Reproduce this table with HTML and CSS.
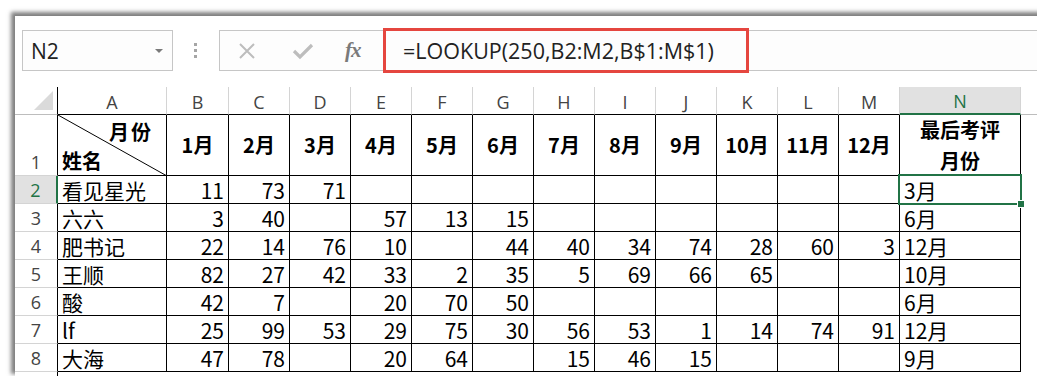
FILE: index.html
```html
<!DOCTYPE html>
<html lang="zh">
<head>
<meta charset="utf-8">
<title>Excel LOOKUP</title>
<link rel="stylesheet" href="styles.css">
</head>
<body>
<div class="window">
  <div class="fbar">
    <div class="namebox"><span class="nb-text">N2</span><span class="caret"></span></div>
    <div class="dots">
      <svg width="4" height="16" viewBox="0 0 4 16"><rect x="0" y="0" width="3" height="3" fill="#a6a6a6"/><rect x="0" y="6" width="3" height="3" fill="#a6a6a6"/><rect x="0" y="12" width="3" height="3" fill="#a6a6a6"/></svg>
    </div>
    <div class="btns">
      <svg class="ic-x" width="18" height="18" viewBox="0 0 18 18"><path d="M2 2 L16 16 M16 2 L2 16" stroke="#bdbdbd" stroke-width="2" fill="none"/></svg>
      <svg class="ic-ok" width="22" height="18" viewBox="0 0 22 18"><path d="M2 9 L8 15 L20 3" stroke="#bdbdbd" stroke-width="3.2" fill="none"/></svg>
      <span class="fx">fx</span>
    </div>
    <div class="finput">
      <div class="hl"><span class="ftext">=LOOKUP(250,B2:M2,B$1:M$1)</span></div>
    </div>
  </div>

  <div class="sheet">
    <div class="ch corner"><span class="tri"></span></div>
    <div class="ch col">A</div><div class="ch col">B</div><div class="ch col">C</div><div class="ch col">D</div><div class="ch col">E</div><div class="ch col">F</div><div class="ch col">G</div><div class="ch col">H</div><div class="ch col">I</div><div class="ch col">J</div><div class="ch col">K</div><div class="ch col">L</div><div class="ch col">M</div><div class="ch col sel">N</div><div class="ch rest"></div>

    <div class="rh">1</div>
    <div class="c diag">
      <svg class="diagline" width="109" height="61" viewBox="0 0 109 61" preserveAspectRatio="none"><line x1="0" y1="0" x2="109" y2="61" stroke="#000" stroke-width="1"/></svg>
      <span class="d-top">月份</span>
      <span class="d-bot">姓名</span>
    </div>
    <div class="c h">1月</div><div class="c h">2月</div><div class="c h">3月</div><div class="c h">4月</div><div class="c h">5月</div><div class="c h">6月</div><div class="c h">7月</div><div class="c h">8月</div><div class="c h">9月</div><div class="c h">10月</div><div class="c h">11月</div><div class="c h">12月</div>
    <div class="c h two">最后考评<br>月份</div><div class="rest"></div>

    <div class="rh sel">2</div>
    <div class="c">看见星光</div><div class="c n">11</div><div class="c n">73</div><div class="c n">71</div><div class="c n"></div><div class="c n"></div><div class="c n"></div><div class="c n"></div><div class="c n"></div><div class="c n"></div><div class="c n"></div><div class="c n"></div><div class="c n"></div>
    <div class="c active">3月<span class="selbox"><span class="handle"></span></span></div><div class="rest"></div>

    <div class="rh">3</div>
    <div class="c">六六</div><div class="c n">3</div><div class="c n">40</div><div class="c n"></div><div class="c n">57</div><div class="c n">13</div><div class="c n">15</div><div class="c n"></div><div class="c n"></div><div class="c n"></div><div class="c n"></div><div class="c n"></div><div class="c n"></div>
    <div class="c">6月</div><div class="rest"></div>

    <div class="rh">4</div>
    <div class="c">肥书记</div><div class="c n">22</div><div class="c n">14</div><div class="c n">76</div><div class="c n">10</div><div class="c n"></div><div class="c n">44</div><div class="c n">40</div><div class="c n">34</div><div class="c n">74</div><div class="c n">28</div><div class="c n">60</div><div class="c n">3</div>
    <div class="c">12月</div><div class="rest"></div>

    <div class="rh">5</div>
    <div class="c">王顺</div><div class="c n">82</div><div class="c n">27</div><div class="c n">42</div><div class="c n">33</div><div class="c n">2</div><div class="c n">35</div><div class="c n">5</div><div class="c n">69</div><div class="c n">66</div><div class="c n">65</div><div class="c n"></div><div class="c n"></div>
    <div class="c">10月</div><div class="rest"></div>

    <div class="rh">6</div>
    <div class="c">酸</div><div class="c n">42</div><div class="c n">7</div><div class="c n"></div><div class="c n">20</div><div class="c n">70</div><div class="c n">50</div><div class="c n"></div><div class="c n"></div><div class="c n"></div><div class="c n"></div><div class="c n"></div><div class="c n"></div>
    <div class="c">6月</div><div class="rest"></div>

    <div class="rh">7</div>
    <div class="c">lf</div><div class="c n">25</div><div class="c n">99</div><div class="c n">53</div><div class="c n">29</div><div class="c n">75</div><div class="c n">30</div><div class="c n">56</div><div class="c n">53</div><div class="c n">1</div><div class="c n">14</div><div class="c n">74</div><div class="c n">91</div>
    <div class="c">12月</div><div class="rest"></div>

    <div class="rh">8</div>
    <div class="c">大海</div><div class="c n">47</div><div class="c n">78</div><div class="c n"></div><div class="c n">20</div><div class="c n">64</div><div class="c n"></div><div class="c n">15</div><div class="c n">46</div><div class="c n">15</div><div class="c n"></div><div class="c n"></div><div class="c n"></div>
    <div class="c">9月</div><div class="rest"></div>

    <div class="rh"></div>
  </div>
</div>
</body>
</html>
```

FILE: styles.css
```css
html, body {
  margin: 0;
  padding: 0;
  background: #ffffff;
}

body {
  width: 1037px;
  height: 376px;
  overflow: hidden;
}

.window {
  margin: 16px 0 0 15px;
  width: 1040px;
  height: 360px;
  background: #ffffff;
  box-shadow: -3px -3px 4px 1px rgba(0, 0, 0, 0.5);
  overflow: hidden;
}

/* ---------- formula bar ---------- */
.fbar {
  display: flex;
  align-items: stretch;
  height: 41px;
  margin-top: 14px;
  padding-left: 7px;
}

.namebox {
  width: 151px;
  box-sizing: border-box;
  border: 1px solid #c6c6c6;
  background: #fdfdfd;
  display: flex;
  align-items: center;
  justify-content: space-between;
  padding: 0 9px 0 8px;
}

.nb-text {
  font-family: "Open Sans", "Noto Sans", sans-serif;
  font-size: 21px;
  color: #222;
}

.caret {
  width: 0;
  height: 0;
  border-left: 4px solid transparent;
  border-right: 4px solid transparent;
  border-top: 4px solid #7a7a7a;
}

.dots {
  width: 46px;
  display: flex;
  align-items: center;
  justify-content: center;
}

.btns {
  width: 164px;
  box-sizing: border-box;
  border: 1px solid #c6c6c6;
  border-right: none;
  background: #fdfdfd;
  display: flex;
  align-items: center;
  padding-left: 18px;
}

.ic-x {
  margin-right: 36px;
}

.ic-ok {
  margin-right: 31px;
}

.fx {
  font-family: "Liberation Serif", "DejaVu Serif", serif;
  font-style: italic;
  font-weight: 700;
  font-size: 21px;
  color: #7a7a7a;
  letter-spacing: -1px;
}

.finput {
  flex: 1;
  position: relative;
  box-sizing: border-box;
  border: 1px solid #c6c6c6;
  background: #fdfdfd;
}

.hl {
  position: absolute;
  left: -1px;
  top: -3px;
  width: 366px;
  height: 45px;
  box-sizing: border-box;
  border: 3px solid #e5463f;
  display: flex;
  align-items: center;
  padding-left: 17px;
}

.ftext {
  font-family: "Open Sans", "Noto Sans", sans-serif;
  font-size: 21.5px;
  color: #222;
}

/* ---------- sheet ---------- */
.sheet {
  margin-top: 16px;
  display: grid;
  grid-template-columns: 43px 109px 62px repeat(11, 61px) 121px 1fr;
  grid-template-rows: 28px 61px repeat(8, 28px);
}

.ch {
  box-sizing: border-box;
  border-right: 1px solid #d4d4d4;
  border-bottom: 1px solid #000;
  display: flex;
  align-items: center;
  justify-content: center;
  font-family: "Open Sans", "Noto Sans", sans-serif;
  font-size: 18px;
  color: #444;
  padding-top: 2px;
}

.ch.corner {
  border-right: 1px solid #000;
  border-bottom: 1px solid #bdbdbd;
  position: relative;
}

.tri {
  position: absolute;
  right: 4px;
  bottom: 4px;
  width: 0;
  height: 0;
  border-left: 19px solid transparent;
  border-bottom: 19px solid #dadada;
}

.ch.sel {
  background: #e1e1e1;
  color: #217346;
  border-bottom: 2px solid #217346;
}

.ch.rest {
  border-right: none;
  border-bottom: 1px solid #bdbdbd;
}

.rh {
  box-sizing: border-box;
  border-right: 1px solid #000;
  border-bottom: 1px solid #d4d4d4;
  display: flex;
  align-items: flex-end;
  justify-content: center;
  font-family: "Open Sans", "Noto Sans", sans-serif;
  font-size: 18px;
  color: #444;
  line-height: 26px;
}

.rh.sel {
  background: #e1e1e1;
  color: #217346;
  border-right: 2px solid #217346;
}

.rest {
  background: #fff;
}

.c {
  box-sizing: border-box;
  border-right: 1px solid #000;
  border-bottom: 1px solid #000;
  display: flex;
  align-items: flex-end;
  padding: 0 3px 0 4px;
  font-family: "Noto Sans CJK SC", sans-serif;
  font-size: 21px;
  line-height: 26px;
  color: #000;
  white-space: nowrap;
}

.c.n {
  justify-content: flex-end;
  padding-right: 4px;
}

.c.h {
  font-weight: 700;
  font-size: 20px;
  justify-content: center;
  align-items: center;
  padding: 0;
}

.c.h.two {
  text-align: center;
  line-height: 31px;
}

.c.diag {
  position: relative;
  flex-direction: column;
  align-items: stretch;
  justify-content: flex-start;
  font-weight: 700;
  font-size: 20px;
  padding: 3px 0 0 4px;
  line-height: 27px;
}

.diagline {
  position: absolute;
  left: 0;
  top: 0;
}

.d-top {
  align-self: flex-end;
  margin-right: 13px;
  letter-spacing: 2px;
}

.d-bot {
  align-self: flex-start;
  margin-top: 2px;
}

.c.active {
  position: relative;
}

.selbox {
  position: absolute;
  left: -2px;
  top: -2px;
  right: -2px;
  bottom: -2px;
  border: 2px solid #217346;
}

.handle {
  position: absolute;
  right: -5px;
  bottom: -5px;
  width: 6px;
  height: 6px;
  background: #217346;
  border: 1px solid #fff;
}
```
